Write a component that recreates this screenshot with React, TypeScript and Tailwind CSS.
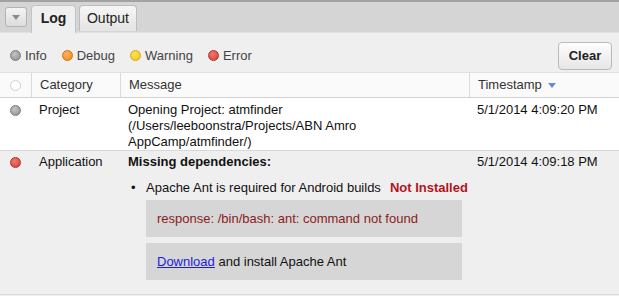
import React from 'react'

const cols = 'grid grid-cols-[31px_89px_349px_150px]'

function Dot({ kind }: { kind: 'info' | 'debug' | 'warning' | 'error' | 'empty' }) {
  const styles: Record<string, string> = {
    info: 'bg-[radial-gradient(circle_at_40%_35%,#c4c4c4,#8a8a8a)] border-[#7c7c7c]',
    debug: 'bg-[radial-gradient(circle_at_40%_35%,#ffb45a,#ee8418)] border-[#d47414]',
    warning: 'bg-[radial-gradient(circle_at_40%_35%,#ffe35a,#efc017)] border-[#d3a812]',
    error: 'bg-[radial-gradient(circle_at_40%_35%,#f07a6e,#d23b2f)] border-[#b53128]',
    empty: 'bg-white border-[#cfcfcf]',
  }
  return <span className={`inline-block shrink-0 w-[11px] h-[11px] rounded-full border ${styles[kind]}`} />
}

function FilterItem({ kind, label }: { kind: 'info' | 'debug' | 'warning' | 'error'; label: string }) {
  return (
    <span className="flex items-center gap-[4px]">
      <Dot kind={kind} />
      <span>{label}</span>
    </span>
  )
}

export default function App() {
  return (
    <div className="w-[619px] h-[296px] overflow-hidden bg-[#efefef] font-['Liberation_Sans',Arial,sans-serif] text-[13px] text-[#111]">
      <div className="h-[2px] bg-[#a2a2a2]" />

      {/* tab strip */}
      <div className="h-[31px] bg-[#d5d5d5] border-b border-[#e2e2e2] flex items-start pl-[5px] pt-[3px]">
        <button className="mt-[2px] w-[22px] h-[20px] rounded-[3px] border border-[#b3b3b3] bg-[linear-gradient(#f4f4f4,#dcdcdc)] flex items-center justify-center">
          <svg width="8" height="5" viewBox="0 0 8 5">
            <path d="M0 0h8L4 5z" fill="#8a8a8a" />
          </svg>
        </button>
        <div className="ml-[4px] w-[45px] h-[28px] rounded-t-[4px] border border-b-0 border-[#c4c4c4] bg-[#efefef] flex items-center justify-center pb-[3px] font-bold text-[14px] text-[#222]">
          Log
        </div>
        <div className="ml-[3px] w-[58px] h-[26px] rounded-t-[4px] border border-b-0 border-[#bdbdbd] bg-[linear-gradient(#f6f6f6,#e3e3e3)] flex items-center justify-center pb-[1px] text-[14px] text-[#222]">
          Output
        </div>
      </div>

      {/* filter bar */}
      <div className="h-[39px] pt-[6px] pl-[10px] pr-[7px] flex items-center justify-between text-[#444]">
        <div className="flex items-center gap-[15px]">
          <FilterItem kind="info" label="Info" />
          <FilterItem kind="debug" label="Debug" />
          <FilterItem kind="warning" label="Warning" />
          <FilterItem kind="error" label="Error" />
        </div>
        <button className="w-[54px] h-[28px] rounded-[4px] border border-[#b9b9b9] bg-[linear-gradient(#fdfdfd,#e6e6e6)] font-bold text-[13px] text-[#222]">
          Clear
        </button>
      </div>

      {/* header */}
      <div className={`${cols} h-[26px] bg-[#fafafa] border-t border-[#e0e0e0] border-b border-b-[#d2d2d2] text-[#333]`}>
        <div className="flex items-center justify-center">
          <Dot kind="empty" />
        </div>
        <div className="border-l border-[#dadada] pl-[8px] flex items-center">Category</div>
        <div className="border-l border-[#dadada] pl-[8px] flex items-center">Message</div>
        <div className="border-l border-[#dadada] pl-[8px] flex items-center gap-[6px]">
          Timestamp
          <svg width="8" height="5" viewBox="0 0 8 5">
            <path d="M0 0h8L4 5z" fill="#5d8fd6" />
          </svg>
        </div>
      </div>

      {/* row 1 */}
      <div className={`${cols} h-[52px] bg-white pt-[4px] leading-[16px]`}>
        <div className="flex justify-center pt-[3px]">
          <Dot kind="info" />
        </div>
        <div className="pl-[8px]">Project</div>
        <div className="pl-[8px] whitespace-nowrap">
          Opening Project: atmfinder
          <br />
          (/Users/leeboonstra/Projects/ABN Amro
          <br />
          AppCamp/atmfinder/)
        </div>
        <div className="pl-[8px]">5/1/2014 4:09:20 PM</div>
      </div>

      {/* row 2 */}
      <div className={`${cols} h-[145px] bg-[#efefef] border-y border-[#d9d9d9] pt-[3px] leading-[16px]`}>
        <div className="flex justify-center pt-[3px]">
          <Dot kind="error" />
        </div>
        <div className="pl-[8px]">Application</div>
        <div className="pl-[8px]">
          <div className="font-bold">Missing dependencies:</div>
          <div className="mt-[10px] flex items-start whitespace-nowrap">
            <span className="w-[18px] shrink-0 pl-[3px]">•</span>
            <span>Apache Ant is required for Android builds</span>
            <span className="ml-[9px] font-bold text-[#b3141c]">Not Installed</span>
          </div>
          <div className="ml-[18px] mt-[4px] w-[316px] h-[37px] bg-[#d6d6d6] pl-[11px] flex items-center text-[#8a1c1c]">
            response: /bin/bash: ant: command not found
          </div>
          <div className="ml-[18px] mt-[6px] w-[316px] h-[37px] bg-[#d6d6d6] pl-[11px] flex items-center">
            <a href="#" className="text-[#1c1ce0] underline">Download</a>
            <span>&nbsp;and install Apache Ant</span>
          </div>
        </div>
        <div className="pl-[8px]">5/1/2014 4:09:18 PM</div>
      </div>
    </div>
  )
}
